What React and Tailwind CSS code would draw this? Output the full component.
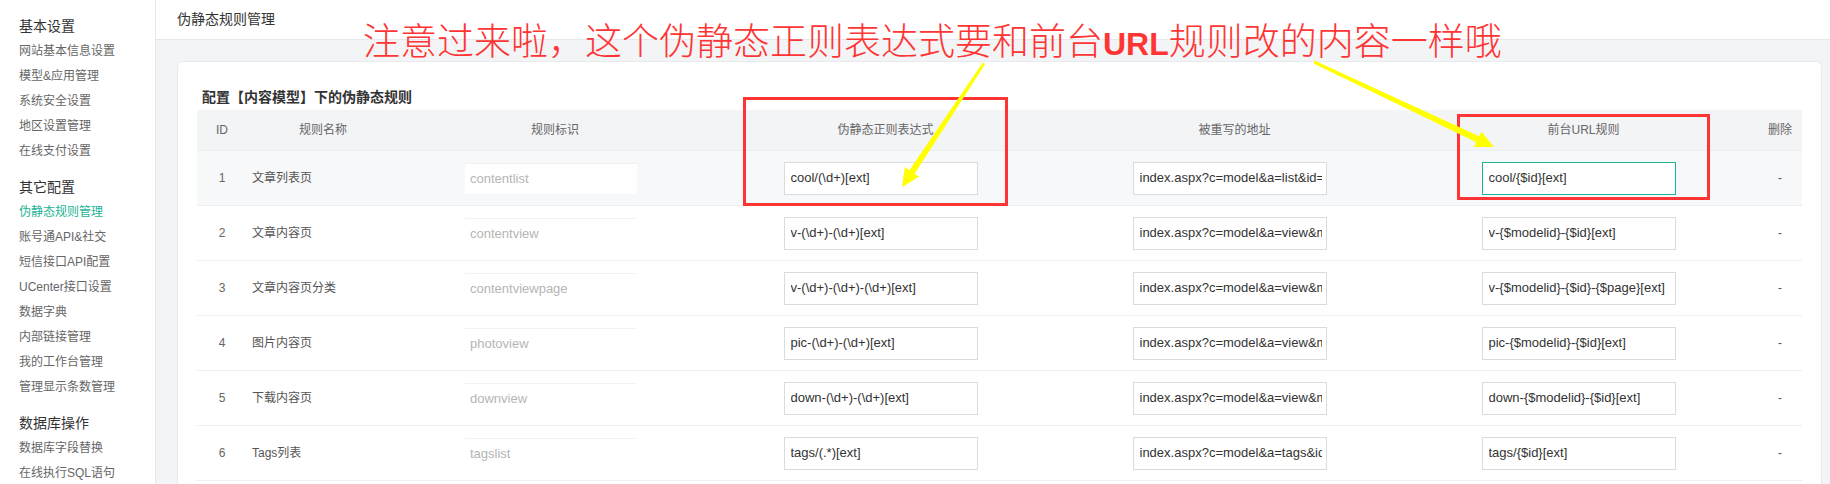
import React from "react";

const UI_FONT = '"Liberation Sans", "Noto Sans CJK SC", sans-serif';

const groups = [
  { title: "基本设置", items: ["网站基本信息设置", "模型&应用管理", "系统安全设置", "地区设置管理", "在线支付设置"] },
  {
    title: "其它配置",
    items: ["伪静态规则管理", "账号通API&社交", "短信接口API配置", "UCenter接口设置", "数据字典", "内部链接管理", "我的工作台管理", "管理显示条数管理"],
  },
  { title: "数据库操作", items: ["数据库字段替换", "在线执行SQL语句"] },
];

const rows = [
  ["1", "文章列表页", "contentlist", "cool/(\\d+)[ext]", "index.aspx?c=model&a=list&id=$1", "cool/{$id}[ext]"],
  ["2", "文章内容页", "contentview", "v-(\\d+)-(\\d+)[ext]", "index.aspx?c=model&a=view&modelid=$1&id=$2", "v-{$modelid}-{$id}[ext]"],
  ["3", "文章内容页分类", "contentviewpage", "v-(\\d+)-(\\d+)-(\\d+)[ext]", "index.aspx?c=model&a=view&modelid=$1&id=$2&page=$3", "v-{$modelid}-{$id}-{$page}[ext]"],
  ["4", "图片内容页", "photoview", "pic-(\\d+)-(\\d+)[ext]", "index.aspx?c=model&a=view&modelid=$1&id=$2", "pic-{$modelid}-{$id}[ext]"],
  ["5", "下载内容页", "downview", "down-(\\d+)-(\\d+)[ext]", "index.aspx?c=model&a=view&modelid=$1&id=$2", "down-{$modelid}-{$id}[ext]"],
  ["6", "Tags列表", "tagslist", "tags/(.*)[ext]", "index.aspx?c=model&a=tags&id=$1", "tags/{$id}[ext]"],
];

function Field({ value, focused }) {
  return (
    <div
      className={
        focused
          ? "w-[194px] h-[33px] bg-white border border-[#1ab394] flex items-center pl-[6px] pr-[4px]"
          : "w-[194px] h-[33px] bg-white border border-[#d9dcdf] flex items-center pl-[6px] pr-[4px]"
      }
    >
      <div className="overflow-hidden whitespace-nowrap text-[13px] text-[#333] w-full">{value}</div>
    </div>
  );
}

export default function App() {
  return (
    <div className="relative w-[1830px] h-[484px] overflow-hidden flex bg-[#f3f4f5]" style={{ fontFamily: UI_FONT }}>
      {/* Sidebar */}
      <aside className="w-[156px] shrink-0 h-full bg-white border-r border-[#e6e7e9] pl-[19px] pt-[14px]">
        {groups.map((g) => (
          <div key={g.title} className="mb-[11px]">
            <div className="h-[25px] leading-[25px] text-[14px] text-[#333]">{g.title}</div>
            {g.items.map((it) => (
              <div
                key={it}
                className={
                  it === "伪静态规则管理"
                    ? "h-[25px] leading-[25px] text-[12px] text-[#1ab394] whitespace-nowrap"
                    : "h-[25px] leading-[25px] text-[12px] text-[#666] whitespace-nowrap"
                }
              >
                {it}
              </div>
            ))}
          </div>
        ))}
      </aside>

      {/* Main */}
      <main className="flex-1 flex flex-col min-w-0">
        <div className="h-[40px] shrink-0 bg-white border-b border-[#e6e8eb] flex items-center pl-[21px] text-[14px] text-[#333]">
          伪静态规则管理
        </div>
        <div className="pl-[21px] pr-[8px] pt-[21px]">
          <div className="bg-white rounded-[6px] border border-[#e8eaed] px-[19px] pt-[25px] pb-[20px]">
            <h3 className="pl-[5px] h-[20px] leading-[20px] text-[14px] font-bold text-[#333] mb-[3px]">
              配置【内容模型】下的伪静态规则
            </h3>
            <div className="text-[12px]">
              <div className="grid grid-cols-[50px_152px_312px_349px_349px_349px_44px] h-[40px] bg-[#f3f4f6] text-[#666] items-center text-center">
                <div>ID</div>
                <div>规则名称</div>
                <div>规则标识</div>
                <div>伪静态正则表达式</div>
                <div>被重写的地址</div>
                <div>前台URL规则</div>
                <div>删除</div>
              </div>
              {rows.map((r, i) => (
                <div
                  key={r[0]}
                  className={
                    i === 0
                      ? "grid grid-cols-[50px_152px_312px_349px_349px_349px_44px] h-[55px] items-center border-t border-[#eceef0] bg-[#f7f8fa]"
                      : i === rows.length - 1
                      ? "grid grid-cols-[50px_152px_312px_349px_349px_349px_44px] h-[56px] items-center border-t border-b border-[#eceef0] bg-white"
                      : "grid grid-cols-[50px_152px_312px_349px_349px_349px_44px] h-[55px] items-center border-t border-[#eceef0] bg-white"
                  }
                >
                  <div className="text-center text-[#666]">{r[0]}</div>
                  <div className="pl-[5px] text-[#555] whitespace-nowrap">{r[1]}</div>
                  <div className="flex justify-center pr-[8px]">
                    <div className="w-[172px] h-[31px] bg-white border-t border-[#f1f2f3] flex items-center px-[5px] text-[13px] text-[#b5b5b5]">
                      {r[2]}
                    </div>
                  </div>
                  <div className="flex justify-center pr-[10px]">
                    <Field value={r[3]} />
                  </div>
                  <div className="flex justify-center pr-[10px]">
                    <Field value={r[4]} />
                  </div>
                  <div className="flex justify-center pr-[10px]">
                    <Field value={r[5]} focused={i === 0} />
                  </div>
                  <div className="text-center text-[#555]">-</div>
                </div>
              ))}
            </div>
          </div>
        </div>
      </main>

      {/* Annotation overlay: red boxes and yellow arrows */}
      <svg className="absolute inset-0 pointer-events-none" width="1830" height="484" viewBox="0 0 1830 484">
        <rect x="744.5" y="98.5" width="262" height="106" fill="none" stroke="#ff3535" strokeWidth="3" />
        <rect x="1458.5" y="115.5" width="250" height="83" fill="none" stroke="#ff3535" strokeWidth="3" />
        <polygon
          fill="#ffff00"
          points="985.2,64 914.6,173.8 919,176.7 902,187 904.8,167.3 909.4,170.2 982.8,62.4"
        />
        <polygon
          fill="#ffff00"
          points="1313.5,63.4 1476.3,142.3 1474.1,147 1494,147 1481.3,131.6 1479.2,136.3 1314.5,60.6"
        />
      </svg>

      {/* Red annotation text */}
      <div
        className="absolute left-[363px] top-[19px] whitespace-nowrap text-[37px] leading-[40px] text-[#ff3535] font-light"
        style={{ fontFamily: '"Noto Sans CJK SC", sans-serif' }}
      >
        注意过来啦，这个伪静态正则表达式要和前台
        <span className="font-bold text-[32px]" style={{ fontFamily: '"Liberation Sans", sans-serif' }}>
          URL
        </span>
        规则改的内容一样哦
      </div>
    </div>
  );
}
